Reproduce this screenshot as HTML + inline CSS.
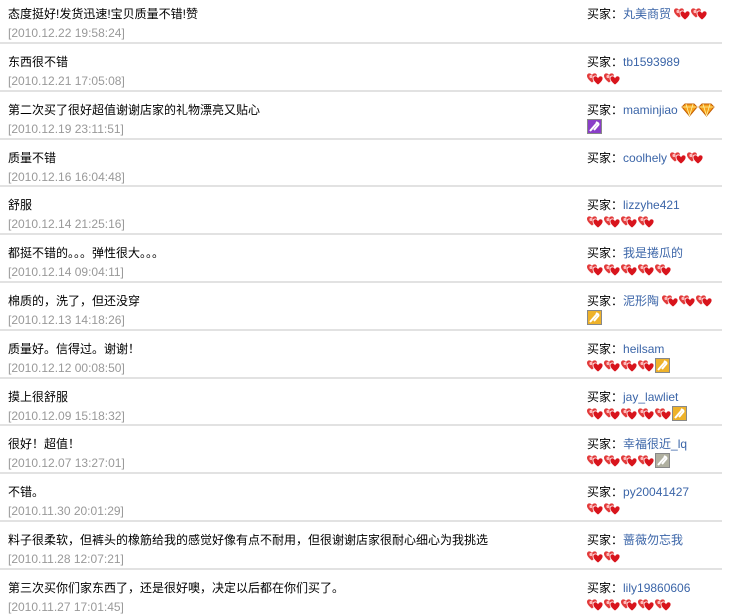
<!DOCTYPE html>
<html><head><meta charset="utf-8"><style>
body{margin:0;width:730px;height:616px;overflow:hidden;background:#fff;font-family:"Liberation Sans","Noto Sans CJK SC",sans-serif;font-size:12px;color:#000}
.r{position:absolute;left:0;width:722px;height:45.8px;border-bottom:2px solid #e2e2e2}
.c{position:absolute;left:8px;top:10px;line-height:16px}
.d{position:absolute;left:8px;top:29px;line-height:16px;color:#999}
.b{position:absolute;left:587px;top:10px;line-height:16px;width:135px}
.b a{color:#3b65a8;text-decoration:none}
svg{vertical-align:-3px}
.l2{display:block;height:16px;margin-top:1px}
</style></head><body>
<script>
var H='<svg width="17" height="14" viewBox="0 0 17 14"><path d="M5 3C3.5 .5 0 1 0 4c0 3 5 6.5 5 6.5S10 7 10 4C10 1 6.5.5 5 3z" fill="#e23a3a"/><path d="M11 5.5C9.5 3 6 3.5 6 6.5c0 3 5 6.5 5 6.5s5-3.5 5-6.5c0-3-3.5-3.5-5-1z" fill="#d8141c" stroke="#fff" stroke-width=".8"/><circle cx="4" cy="4.5" r="1.6" fill="#fbb"/></svg>';
var D='<svg width="17" height="14" viewBox="0 0 17 14"><path d="M1 4L4 1h9l3 3-7.5 9z" fill="#f7a21b" stroke="#c35b00"/><path d="M1 4h15M5 1l3.5 12M12 1L8.5 13" stroke="#fff3a0" stroke-width=".8" fill="none"/></svg>';
function B(c){return '<svg width="15" height="15" viewBox="0 0 15 15"><rect x=".5" y=".5" width="14" height="14" fill="'+c+'" stroke="#888"/><path d="M3 12L10 4M7 11l5-6M9 3l3 2" stroke="#fff" stroke-width="2"/></svg>'}
function h(n){return H.repeat(n)}
</script>
<div class="r" style="top:-3.8px"><div class="c">态度挺好!发货迅速!宝贝质量不错!赞</div><div class="d">[2010.12.22 19:58:24]</div><div class="b">买家：<a>丸美商贸</a> <script>document.write(h(2))</script></div></div>
<div class="r" style="top:44px"><div class="c">东西很不错</div><div class="d">[2010.12.21 17:05:08]</div><div class="b">买家：<a>tb1593989</a><span class="l2"><script>document.write(h(2))</script></span></div></div>
<div class="r" style="top:91.8px"><div class="c">第二次买了很好超值谢谢店家的礼物漂亮又贴心</div><div class="d">[2010.12.19 23:11:51]</div><div class="b">买家：<a>maminjiao</a> <script>document.write(D+D)</script><span class="l2"><script>document.write(B('#8a3ec8'))</script></span></div></div>
<div class="r" style="top:139.6px"><div class="c">质量不错</div><div class="d">[2010.12.16 16:04:48]</div><div class="b">买家：<a>coolhely</a> <script>document.write(h(2))</script></div></div>
<div class="r" style="top:187.4px"><div class="c">舒服</div><div class="d">[2010.12.14 21:25:16]</div><div class="b">买家：<a>lizzyhe421</a><span class="l2"><script>document.write(h(4))</script></span></div></div>
<div class="r" style="top:235.2px"><div class="c">都挺不错的。。。弹性很大。。。</div><div class="d">[2010.12.14 09:04:11]</div><div class="b">买家：<a>我是捲瓜的</a><span class="l2"><script>document.write(h(5))</script></span></div></div>
<div class="r" style="top:283px"><div class="c">棉质的，洗了，但还没穿</div><div class="d">[2010.12.13 14:18:26]</div><div class="b">买家：<a>泥形陶</a> <script>document.write(h(3))</script><span class="l2"><script>document.write(B('#eeb22a'))</script></span></div></div>
<div class="r" style="top:330.8px"><div class="c">质量好。信得过。谢谢！</div><div class="d">[2010.12.12 00:08:50]</div><div class="b">买家：<a>heilsam</a><span class="l2"><script>document.write(h(4)+B('#eeb22a'))</script></span></div></div>
<div class="r" style="top:378.6px"><div class="c">摸上很舒服</div><div class="d">[2010.12.09 15:18:32]</div><div class="b">买家：<a>jay_lawliet</a><span class="l2"><script>document.write(h(5)+B('#eeb22a'))</script></span></div></div>
<div class="r" style="top:426.4px"><div class="c">很好！超值！</div><div class="d">[2010.12.07 13:27:01]</div><div class="b">买家：<a>幸福很近_lq</a><span class="l2"><script>document.write(h(4)+B('#b0b0a0'))</script></span></div></div>
<div class="r" style="top:474.2px"><div class="c">不错。</div><div class="d">[2010.11.30 20:01:29]</div><div class="b">买家：<a>py20041427</a><span class="l2"><script>document.write(h(2))</script></span></div></div>
<div class="r" style="top:522px"><div class="c">料子很柔软，但裤头的橡筋给我的感觉好像有点不耐用，但很谢谢店家很耐心细心为我挑选</div><div class="d">[2010.11.28 12:07:21]</div><div class="b">买家：<a>蔷薇勿忘我</a><span class="l2"><script>document.write(h(2))</script></span></div></div>
<div class="r" style="top:569.8px;border:0"><div class="c">第三次买你们家东西了，还是很好噢，决定以后都在你们买了。</div><div class="d">[2010.11.27 17:01:45]</div><div class="b">买家：<a>lily19860606</a><span class="l2"><script>document.write(h(5))</script></span></div></div>
</body></html>
